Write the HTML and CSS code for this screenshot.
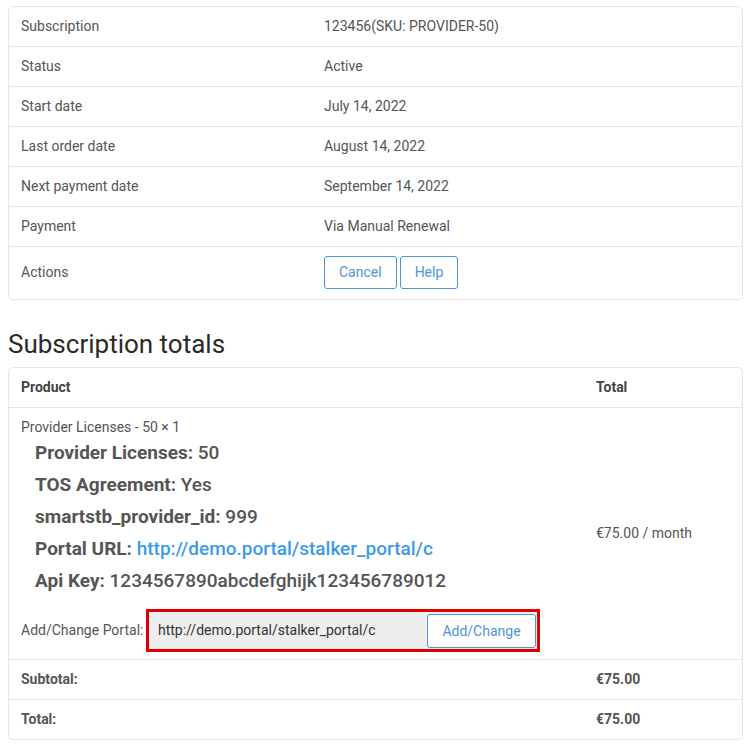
FILE: index.html
```html
<!DOCTYPE html>
<html>
<head>
<meta charset="utf-8">
<link rel="stylesheet" href="styles.css">
</head>
<body>
<div class="page">
  <table class="card details">
    <tr><td class="lbl">Subscription</td><td>123456(SKU: PROVIDER-50)</td></tr>
    <tr><td class="lbl">Status</td><td>Active</td></tr>
    <tr><td class="lbl">Start date</td><td>July 14, 2022</td></tr>
    <tr><td class="lbl">Last order date</td><td>August 14, 2022</td></tr>
    <tr><td class="lbl">Next payment date</td><td>September 14, 2022</td></tr>
    <tr><td class="lbl">Payment</td><td>Via Manual Renewal</td></tr>
    <tr class="actions"><td class="lbl">Actions</td><td><span class="btn">Cancel</span><span class="btn">Help</span></td></tr>
  </table>

  <h2 class="heading">Subscription totals</h2>

  <table class="card totals">
    <tr class="head"><th class="prod">Product</th><th>Total</th></tr>
    <tr class="item">
      <td class="prod">
        <div class="pname">Provider Licenses - 50 × 1</div>
        <ul class="meta">
          <li><b>Provider Licenses:</b> 50</li>
          <li><b>TOS Agreement:</b> Yes</li>
          <li><b>smartstb_provider_id:</b> 999</li>
          <li><b>Portal URL:</b> <a class="link">http://demo.portal/stalker_portal/c</a></li>
          <li><b>Api Key:</b> 1234567890abcdefghijk123456789012</li>
        </ul>
        <div class="portal">
          <span class="plabel">Add/Change Portal:</span>
          <div class="pbox">
            <span class="pinput">http://demo.portal/stalker_portal/c</span>
            <span class="pbtn">Add/Change</span>
          </div>
        </div>
      </td>
      <td class="price">€75.00 / month</td>
    </tr>
    <tr class="sum"><th class="prod">Subtotal:</th><td class="bold">€75.00</td></tr>
    <tr class="sum"><th class="prod">Total:</th><td class="bold">€75.00</td></tr>
  </table>
</div>
</body>
</html>
```
FILE: styles.css
```css
html, body {
  margin: 0;
  padding: 0;
  background: #fff;
}
body {
  font-family: Roboto, "Liberation Sans", sans-serif;
  font-size: 14px;
  color: #515151;
}
.page {
  padding: 6px 11px 0 8px;
}
.card {
  width: 735px;
  border-collapse: separate;
  border-spacing: 0;
  border: 1px solid #e6e6e6;
  border-radius: 5px;
  box-shadow: 0 1px 1px rgba(0,0,0,0.03);
}
.card td, .card th {
  padding: 10px 12px;
  line-height: 19px;
  text-align: left;
  vertical-align: middle;
  border-top: 1px solid #e6e6e6;
}
.card tr:first-child td, .card tr:first-child th {
  border-top: none;
}
.details .lbl {
  width: 279px;
}
.details td {
  color: #555;
}
.details td:last-child {
  padding-left: 12px;
}
.actions td {
  padding-top: 9px;
  padding-bottom: 10px;
}
.btn {
  display: inline-block;
  padding: 6px 14px;
  line-height: 19px;
  border: 1px solid #4f94d4;
  border-radius: 3px;
  color: #4f93d6;
  margin-right: 3px;
  background: #fff;
}
.heading {
  font-size: 26px;
  font-weight: 400;
  line-height: 30px;
  color: #2a2a2a;
  margin: 29px 0 8px 0;
}
.totals th {
  font-weight: 700;
  color: #444;
}
.totals .prod {
  width: 551px;
}
.item td {
  vertical-align: middle;
}
.item td.prod {
  vertical-align: top;
  padding-bottom: 7px;
}
.pname {
  line-height: 19px;
  color: #555;
}
.meta {
  list-style: none;
  margin: 0;
  padding: 0 0 0 14px;
  font-size: 19px;
  font-weight: 500;
  line-height: 32px;
  color: #555;
}
.meta b {
  font-weight: 700;
}
.link {
  color: #3d9be6;
  text-decoration: none;
}
.portal {
  display: flex;
  align-items: center;
  margin-top: 12px;
}
.plabel {
  color: #555;
  width: 125px;
  white-space: nowrap;
}
.pbox {
  box-sizing: border-box;
  display: flex;
  align-items: center;
  border: 3px solid #e10000;
  background: #eeeeee;
  height: 43px;
  width: 394px;
  padding-left: 9px;
  padding-right: 1px;
}
.pinput {
  flex: 1;
  color: #333;
}
.pbtn {
  box-sizing: border-box;
  display: inline-block;
  width: 109px;
  height: 34px;
  line-height: 32px;
  text-align: center;
  background: #fff;
  border: 1px solid #4f94d4;
  border-radius: 3px;
  color: #4f93d6;
  margin-top: 1px;
}
.price {
  color: #555;
}
.sum th, .sum td {
  font-weight: 700;
  color: #555;
}
```
